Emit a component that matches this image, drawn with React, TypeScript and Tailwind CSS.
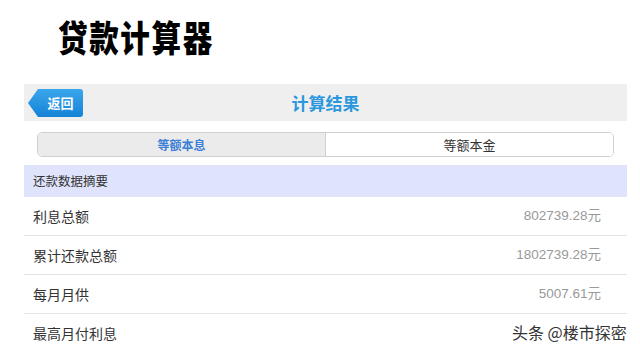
const rows = [
  { label: "利息总额", value: "802739.28元" },
  { label: "累计还款总额", value: "1802739.28元" },
  { label: "每月月供", value: "5007.61元" },
  { label: "最高月付利息", value: "" },
];

const cjk = { fontFamily: '"Noto Sans CJK SC", "Liberation Sans", sans-serif' };
const num = { fontFamily: '"Liberation Sans", "Noto Sans CJK SC", sans-serif' };

function BackButton() {
  return (
    <div className="relative ml-[4px] flex h-[28px] items-center">
      <svg width="10" height="28" viewBox="0 0 10 28" className="block">
        <defs>
          <linearGradient id="bk" x1="0" y1="0" x2="0" y2="1">
            <stop offset="0" stopColor="#3aa6ec" />
            <stop offset="1" stopColor="#1383d6" />
          </linearGradient>
        </defs>
        <path d="M10 0 L0 14 L10 28 Z" fill="url(#bk)" />
      </svg>
      <div className="flex h-[28px] w-[45px] items-center justify-center rounded-r-[3px] bg-gradient-to-b from-[#3aa6ec] to-[#1383d6] text-[13px] font-bold text-white">
        返回
      </div>
    </div>
  );
}

export default function App() {
  return (
    <div className="relative h-[351px] w-[640px] overflow-hidden bg-white" style={cjk}>
      <div className="h-[84px] pl-[58px] pt-[16px]">
        <div className="origin-left scale-x-82 text-[36px] font-black leading-[40px] tracking-[2px] text-black">
          贷款计算器
        </div>
      </div>
      <div className="ml-[24px] w-[603px]">
        <div className="relative flex h-[37px] items-center bg-[#efefef]">
          <BackButton />
          <div className="absolute inset-0 flex items-center justify-center text-[17px] font-bold text-[#2b97dc]">
            计算结果
          </div>
        </div>
        <div className="px-[13px] pb-[8px] pt-[11px]">
          <div className="flex h-[25px] overflow-hidden rounded-[5px] border border-[#cfcfcf]">
            <div className="flex flex-1 items-center justify-center border-r border-[#cfcfcf] bg-[#ebebeb] text-[12px] font-bold text-[#3d7fd6]">
              等额本息
            </div>
            <div className="flex w-[287px] items-center justify-center bg-white text-[13px] text-[#333]">
              等额本金
            </div>
          </div>
        </div>
        <div className="flex h-[32px] items-center bg-[#dfe3fc] pl-[9px] text-[12.5px] text-[#333]">
          还款数据摘要
        </div>
        {rows.map((r, i) => (
          <div
            key={r.label}
            className={`flex h-[39px] items-center justify-between pl-[9px] pr-[26px] ${
              i < rows.length - 1 ? "border-b border-[#e3e3e3]" : ""
            }`}
          >
            <span className="text-[14px] text-[#333]">{r.label}</span>
            <span className="text-[13.5px] text-[#999]" style={num}>
              {r.value}
            </span>
          </div>
        ))}
      </div>
      <div className="absolute left-[512px] top-[320px] text-[16px] text-[#333] [text-shadow:0_0_2px_#fff]">
        头条 @楼市探密
      </div>
    </div>
  );
}
